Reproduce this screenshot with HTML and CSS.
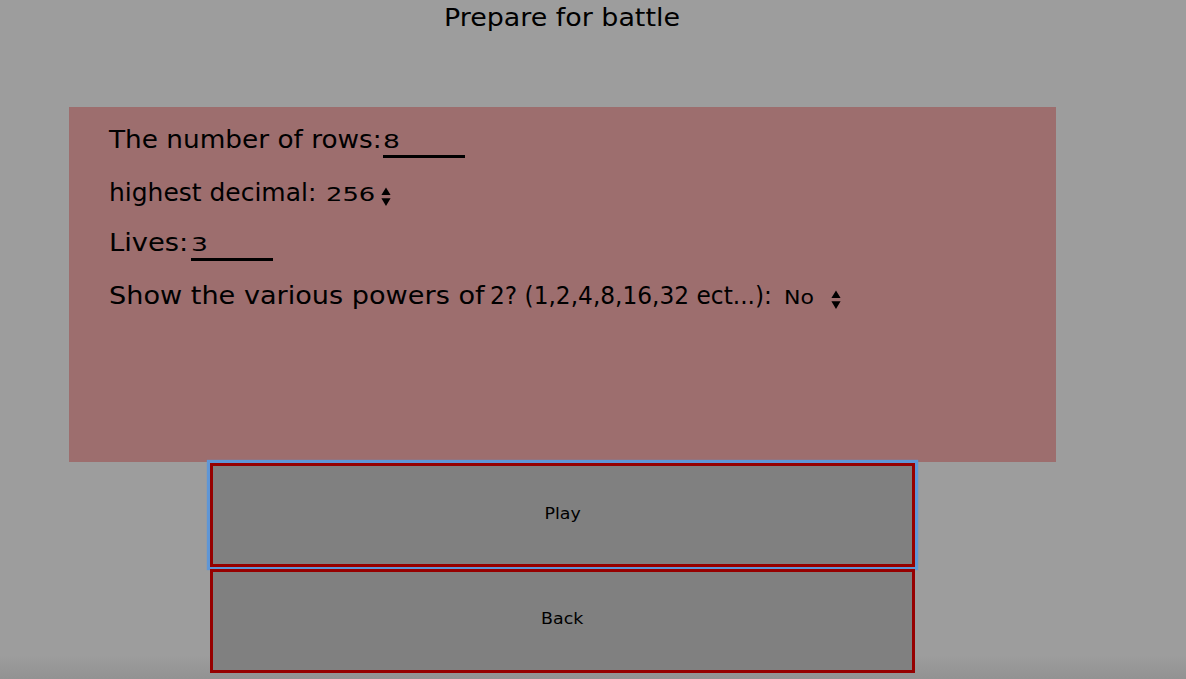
FILE: index.html
```
<!DOCTYPE html>
<html lang="en">
<head>
<meta charset="utf-8">
<title>Prepare for battle</title>
<link rel="stylesheet" href="styles.css">
</head>
<body>
<main class="page">
  <h1 class="title"><span class="wide t-title">Prepare for battle</span></h1>
  <form class="settings">
    <div class="row row-rows"><span class="label l-rows"><span class="wide t-rows">The number of rows:</span></span><span class="field"><input class="number" type="text" value="8" aria-label="Rows"></span></div>
    <div class="row row-decimal"><span class="label l-decimal"><span class="wide t-decimal">highest decimal:</span></span><span class="select s-decimal"><span class="value wide t-value">256</span><svg class="arrows" viewBox="0 0 10 20"><path d="M5 0.5L9.6 8H0.4ZM0.4 11.2H9.6L5 19Z"/></svg></span></div>
    <div class="row row-lives"><span class="label l-lives"><span class="wide t-lives">Lives:</span></span><span class="field"><input class="number" type="text" value="3" aria-label="Lives"></span></div>
    <div class="row row-powers"><span class="label l-powers"><span class="p-words"><span class="wide t-words">Show the various powers of</span></span><span class="wide t-list">2? (1,2,4,8,16,32 ect...):</span></span><span class="select s-powers"><span class="value wide t-no">No</span><svg class="arrows" viewBox="0 0 10 20"><path d="M5 0.5L9.6 8H0.4ZM0.4 11.2H9.6L5 19Z"/></svg></span></div>
  </form>
  <div class="actions">
    <button class="action focused" type="button"><span class="caption">Play</span></button>
    <button class="action back" type="button"><span class="caption">Back</span></button>
  </div>
</main>
</body>
</html>
```
FILE: styles.css
```
* { box-sizing: border-box; }
body {
  margin: 0;
  height: 679px;
  overflow: hidden;
  background: linear-gradient(#9d9d9d 0, #9d9d9d 655px, #929292 679px);
  color: #000;
  font-family: "DejaVu Sans", sans-serif;
}
.page { display: flex; flex-direction: column; align-items: center; width: 1125px; }
/* Stretched lettering */
.wide { display: inline-block; transform-origin: 0 50%; }
.t-title { transform: scaleX(1.12); }
.t-rows { transform: scaleX(1.097); }
.t-decimal { transform: scaleX(1.04); }
.t-lives { transform: scaleX(1.14); }
.t-words { transform: scaleX(1.13); }
.t-list { transform: scaleX(0.97); }
.t-value { transform: scaleX(1.29); }
.t-no { transform: scaleX(1.1); }
.title {
  margin: 0;
  width: 238px;
  height: 107px;
  font-size: 24px;
  font-weight: 400;
  line-height: 36px;
  white-space: nowrap;
}
.settings {
  width: 987px;
  height: 355px;
  padding: 15px 0 0 40px;
  background: #9d6e6e;
}
.row { display: flex; height: 36px; line-height: 36px; white-space: nowrap; }
.row-decimal { margin-top: 17px; }
.row-lives { margin-top: 14px; }
.row-powers { margin-top: 17px; }
.label { flex: none; font-size: 24px; }
.l-rows { width: 274px; }
.l-decimal { width: 216px; }
.l-lives { width: 82px; }
.l-powers { display: flex; width: 675px; }
.p-words { width: 381px; }
.field { width: 82px; height: 36px; border-bottom: 3px solid #000; }
.number {
  display: block;
  width: 60px;
  height: 33px;
  padding: 4px 0 0;
  border: 0;
  background: transparent;
  font: 20px "DejaVu Sans", sans-serif;
  transform: scaleX(1.33);
  transform-origin: 0 50%;
}
.select { display: flex; align-items: flex-start; font-size: 20px; }
.s-decimal { width: 66px; justify-content: space-between; padding-left: 1px; }
.s-powers { width: 57px; justify-content: space-between; }
.value { padding-top: 1px; }
.arrows { width: 10px; height: 20px; margin-top: 12px; }
.actions { display: flex; flex-direction: column; gap: 2px; width: 705px; margin-top: 1px; }
.action {
  height: 104px;
  padding: 0 0 2px;
  border: 3px solid #960000;
  background: #808080;
  color: #000;
  font: 15px "DejaVu Sans", sans-serif;
}
.caption { display: inline-block; transform: scaleX(1.16); }
.focused { outline: 0; box-shadow: 0 0 1px 3px #5f96d6; }
.back { z-index: 1; padding-bottom: 4px; }
```
